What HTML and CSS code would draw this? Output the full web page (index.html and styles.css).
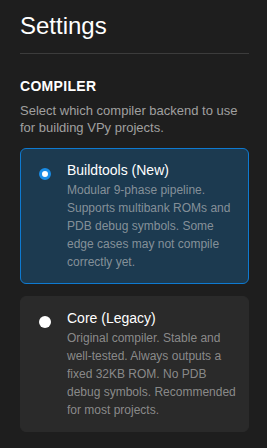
FILE: index.html
```html
<!DOCTYPE html>
<html>
<head>
<meta charset="utf-8">
<link rel="stylesheet" href="styles.css">
</head>
<body>
<div class="page">
  <h1 class="title">Settings</h1>
  <div class="divider"></div>
  <section class="section">
    <h2 class="section-title">COMPILER</h2>
    <p class="section-desc">Select which compiler backend to use for building VPy projects.</p>
    <div class="options">
      <label class="option selected">
        <span class="radio"></span>
        <span class="option-body">
          <span class="option-title">Buildtools (New)</span>
          <span class="option-desc">Modular 9-phase pipeline. Supports multibank ROMs and PDB debug symbols. Some edge cases may not compile correctly yet.</span>
        </span>
      </label>
      <label class="option">
        <span class="radio"></span>
        <span class="option-body">
          <span class="option-title">Core (Legacy)</span>
          <span class="option-desc">Original compiler. Stable and well-tested. Always outputs a fixed 32KB ROM. No PDB debug symbols. Recommended for most projects.</span>
        </span>
      </label>
    </div>
  </section>
</div>
</body>
</html>
```
FILE: styles.css
```css
html, body {
  margin: 0;
  padding: 0;
  background: #1e1e1e;
  height: 100%;
}
body {
  font-family: "Liberation Sans", Arial, sans-serif;
  color: #ffffff;
}
.page {
  padding: 12px 18px 16px 20px;
}
.title {
  margin: 0;
  font-size: 24px;
  font-weight: normal;
  line-height: 28px;
  color: #ffffff;
}
.divider {
  height: 1px;
  background: #3c3c3c;
  margin-top: 13px;
}
.section {
  margin-top: 24px;
}
.section-title {
  margin: 0;
  font-size: 14px;
  font-weight: bold;
  letter-spacing: 0.3px;
  line-height: 16px;
}
.section-desc {
  margin: 8px 0 0;
  font-size: 13px;
  line-height: 17px;
  color: #a0a0a0;
}
.options {
  display: flex;
  flex-direction: column;
  gap: 12px;
  margin-top: 12px;
}
.option {
  display: flex;
  align-items: flex-start;
  gap: 16px;
  padding: 12px 12px 12px 18px;
  border-radius: 6px;
  background: #2a2a2a;
  border: 1px solid #2a2a2a;
  height: 110px;
}
.option.selected {
  background: #1c3a50;
  border-color: #0e7ad1;
}
.radio {
  flex: none;
  width: 12px;
  height: 12px;
  border-radius: 50%;
  background: #ffffff;
  margin-top: 7px;
  box-sizing: border-box;
}
.option.selected .radio {
  border: 3px solid #1a8ce6;
  background: #ffffff;
}
.option-body {
  display: flex;
  flex-direction: column;
}
.option-title {
  font-size: 14px;
  line-height: 18px;
  color: #ffffff;
}
.option-desc {
  margin-top: 2px;
  font-size: 12px;
  line-height: 18px;
  color: rgba(200, 200, 200, 0.62);
}
```
